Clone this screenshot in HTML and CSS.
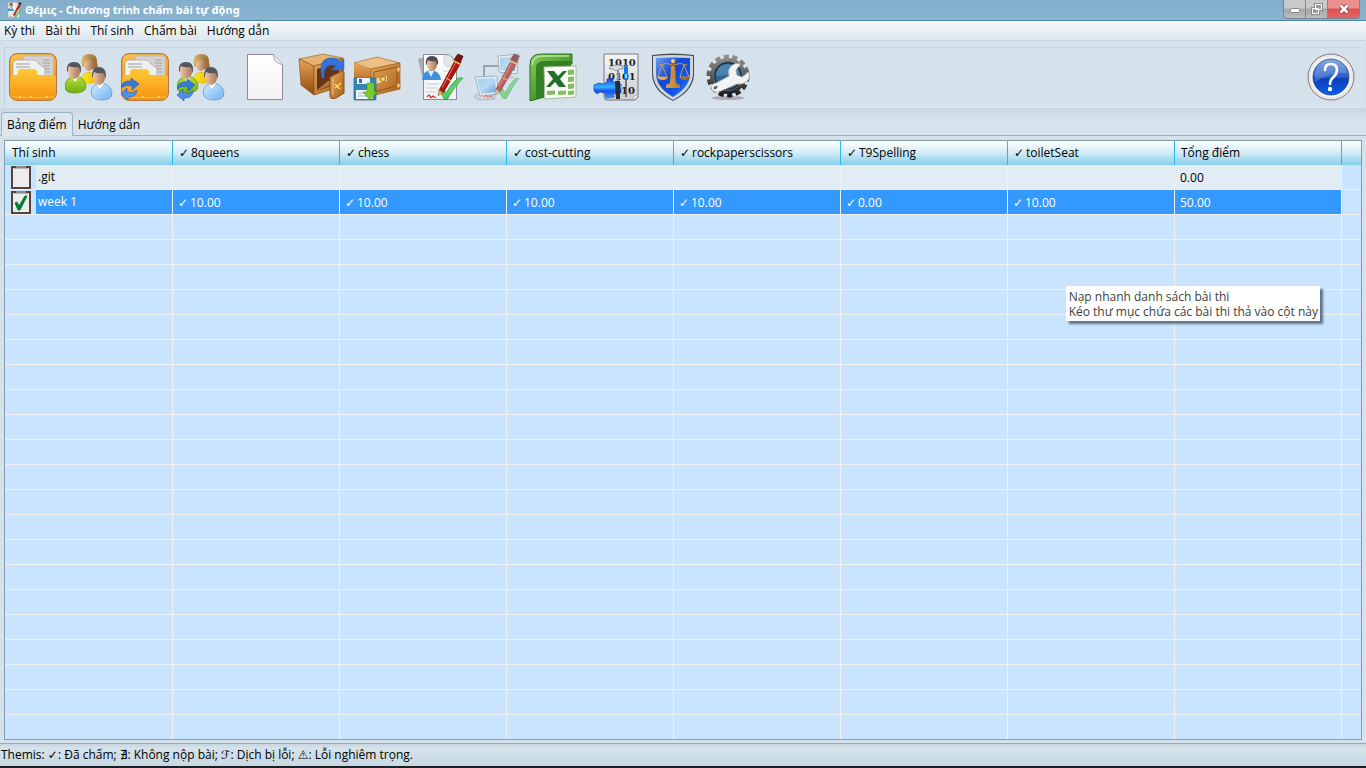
FILE: index.html
```html
<!DOCTYPE html>
<html lang="vi">
<head>
<meta charset="utf-8">
<title>Θέμις - Chương trình chấm bài tự động</title>
<link rel="stylesheet" href="styles.css">
</head>
<body>
<svg class="defs" width="0" height="0" aria-hidden="true">
  <defs>
    <linearGradient id="orange" x1="0" y1="0" x2="0" y2="1"><stop offset="0" stop-color="#fbc04c"/><stop offset="1" stop-color="#ee8a08"/></linearGradient>
    <linearGradient id="pocket" x1="0" y1="0" x2="0" y2="1"><stop offset="0" stop-color="#ffc937"/><stop offset="1" stop-color="#f6920e"/></linearGradient>
    <linearGradient id="paper" x1="0" y1="0" x2="0" y2="1"><stop offset="0" stop-color="#ffffff"/><stop offset="1" stop-color="#f1f1f4"/></linearGradient>
    <linearGradient id="grey" x1="0" y1="0" x2="0" y2="1"><stop offset="0" stop-color="#f5f5f5"/><stop offset="1" stop-color="#c9cdd2"/></linearGradient>
    <linearGradient id="skin" x1="0" y1="0" x2="1" y2="0"><stop offset="0" stop-color="#efc7a4"/><stop offset="1" stop-color="#a8775a"/></linearGradient>
    <linearGradient id="hair" x1="0" y1="0" x2="1" y2="0"><stop offset="0" stop-color="#d9b46c"/><stop offset="1" stop-color="#94662c"/></linearGradient>
    <linearGradient id="green" x1="0" y1="0" x2="0" y2="1"><stop offset="0" stop-color="#b8e23a"/><stop offset="1" stop-color="#6fae12"/></linearGradient>
    <linearGradient id="yellow" x1="0" y1="0" x2="1" y2="0"><stop offset="0" stop-color="#ffe52c"/><stop offset="1" stop-color="#eec400"/></linearGradient>
    <linearGradient id="sky" x1="0" y1="0" x2="1" y2="1"><stop offset="0" stop-color="#d2ebff"/><stop offset="1" stop-color="#6fb2f2"/></linearGradient>
    <linearGradient id="wood" x1="0" y1="0" x2="1" y2="1"><stop offset="0" stop-color="#e6a85e"/><stop offset="1" stop-color="#a95f17"/></linearGradient>
    <linearGradient id="woodSide" x1="0" y1="0" x2="0" y2="1"><stop offset="0" stop-color="#e8a456"/><stop offset="1" stop-color="#8e470f"/></linearGradient>
    <linearGradient id="screen" x1="0" y1="0" x2="1" y2="1"><stop offset="0" stop-color="#8cc4f2"/><stop offset=".5" stop-color="#a9d6f8"/><stop offset="1" stop-color="#2c80d2"/></linearGradient>
    <linearGradient id="excel" x1="0" y1="0" x2="1" y2="1"><stop offset="0" stop-color="#8ccf5e"/><stop offset=".5" stop-color="#4d9f31"/><stop offset="1" stop-color="#1f6b16"/></linearGradient>
    <linearGradient id="shield" x1="0" y1="0" x2="1" y2="1"><stop offset="0" stop-color="#6f9ef2"/><stop offset=".4" stop-color="#1448d4"/><stop offset=".7" stop-color="#1255e8"/><stop offset="1" stop-color="#49a0ff"/></linearGradient>
    <linearGradient id="ball" x1="0" y1="0" x2="0" y2="1"><stop offset="0" stop-color="#6f94dd"/><stop offset=".5" stop-color="#2a5fc9"/><stop offset=".55" stop-color="#0a41b8"/><stop offset="1" stop-color="#0b5cf0"/></linearGradient>
    <linearGradient id="gold" x1="0" y1="0" x2="1" y2="0"><stop offset="0" stop-color="#f0bd62"/><stop offset="1" stop-color="#a05c14"/></linearGradient>
    <linearGradient id="gear" gradientUnits="userSpaceOnUse" x1="0" y1="2" x2="0" y2="44"><stop offset="0" stop-color="#949494"/><stop offset=".6" stop-color="#4c4c4c"/><stop offset="1" stop-color="#161616"/></linearGradient>
    <linearGradient id="tick" x1="0" y1="0" x2="1" y2="1"><stop offset="0" stop-color="#1f9e38"/><stop offset=".5" stop-color="#5ed268"/><stop offset="1" stop-color="#15952a"/></linearGradient>
    <linearGradient id="piece" x1="0" y1="0" x2="0" y2="1"><stop offset="0" stop-color="#1a36e0"/><stop offset=".45" stop-color="#35b4ff"/><stop offset=".65" stop-color="#1450f0"/><stop offset="1" stop-color="#3fa0ff"/></linearGradient>

    <symbol id="i-folder" viewBox="0 0 48 48">
      <rect x=".7" y=".7" width="46.600" height="46.600" rx="7" fill="url(#orange)" stroke="#a8642c"/>
      <path d="M14 26V5q0-2 3-2h24q3 0 3 3v20z" fill="#d3d3d3" stroke="#b3b3b3" stroke-width=".6"/>
      <path d="M4 26V11q0-4 4-4h16q4 0 5 3l7 6v10z" fill="#f0f0f0" stroke="#a9a9a9" stroke-width=".8"/>
      <path d="M7 11h14M7 14h14M34 7h7M34 10h7M35 13h6M36 16h5M37 19h4" stroke="#9f9f9f"/>
      <path d="M1 26q0-4 4-4h2q2 0 2-3t3-3h13q3 0 3 3t2 3h13q4 0 4 4v14q0 7-7 7H8q-7 0-7-7z" fill="url(#pocket)"/>
      <path d="M3 43.500q5 1 21 1t21-1" fill="none" stroke="#ffc45e"/>
      <path d="M11 43v2M22 43v2M38 43v2" stroke="#fff2c8"/>
    </symbol>
    <symbol id="i-sync" viewBox="0 0 18 22">
      <path d="M0 10Q1 2 10 3V0l8 6-7 6V8Q5 6 0 10z" fill="#3478dc" stroke="#2057b4" stroke-width=".6"/>
      <path d="M16 12q-1 8-9 7v3L0 16l6-6v4q6 2 10-2z" fill="#4b90ea" stroke="#2057b4" stroke-width=".6"/>
    </symbol>
    <symbol id="i-users" viewBox="0 0 48 48">
      <path d="M16 30q0-10 8-11 8 1 8 11z" fill="url(#yellow)" stroke="#d3a400" stroke-width=".5"/>
      <path d="M17 13Q15 1 24 1t8 9q2 5-1 6l-6 1z" fill="url(#hair)"/>
      <ellipse cx="23.500" cy="11.500" rx="4.500" ry="6.500" fill="url(#skin)"/><path d="M18 9q1-6 7-6 5 1 5 7-3-1-5-4-3 3-7 3z" fill="url(#hair)"/>
      <path d="M0 33q1-9 10-10 10 1 11 10 0 7-11 7T0 33z" fill="url(#green)" stroke="#5b8a13" stroke-width=".7"/><path d="M6 23l4 6 4-6z" fill="#fff"/>
      <ellipse cx="9" cy="18.500" rx="6" ry="7.500" fill="url(#skin)"/><path d="M2 18q-1-9 7-9t7 9l-1 2q0-5-2-6-5 1-9-1-1 2-1 6z" fill="#55565a"/>
      <path d="M26 40q0-9 10-10 10 1 11 10 0 7-10 7t-11-7z" fill="url(#sky)" stroke="#5b93cd" stroke-width=".7"/><path d="M31 30l4 6 4-6z" fill="#fff"/>
      <ellipse cx="34" cy="24.500" rx="6" ry="7.500" fill="url(#skin)"/><path d="M27 23q0-9 7-9t7 9l-1 3q0-5-2-6-5 1-9-1-1 2-1 6z" fill="#55565a"/>
    </symbol>
    <symbol id="i-page" viewBox="0 0 48 48">
      <path d="M6.500 1.500h26l9 10v35h-35z" fill="url(#paper)" stroke="#93879d"/><path d="M32.500 1.500q0 9 9 10" fill="#ececf0" stroke="#aaa3b0"/>
    </symbol>
    <symbol id="i-restore" viewBox="0 0 48 48">
      <path d="M2 6L26 1l20 4-29 8z" fill="#e8b272" stroke="#a86e31" stroke-width=".7"/>
      <path d="M2 6l15 7v29L4 32z" fill="url(#woodSide)" stroke="#8e531f" stroke-width=".7"/>
      <path d="M17 13l29-8v28L17 42z" fill="url(#wood)" stroke="#8e531f" stroke-width=".7"/>
      <path d="M20 16l22-6v20l-22 8z" fill="#63341a"/><path d="M20 37l11-9 9 1-20 9z" fill="#b8753a"/>
      <path d="M33 24l12-6q2 0 2 2v20l-8 5q-7 2-6-3z" fill="url(#wood)" stroke="#884b16"/><path d="M36 26v16" stroke="#efc37c"/><path d="M38 35l6-5M38 31l5 5" stroke="#ffd75f" stroke-width="1.500"/>
      <path d="M25 25Q20 4 36 5q5 0 7 4l4-3v11H34l5-4q-13-4-12 12z" fill="#3474da" stroke="#2459b5" stroke-width=".5"/>
    </symbol>
    <symbol id="i-backup" viewBox="0 0 48 48">
      <path d="M1 10L24 4l23 6-29 6z" fill="#eec085" stroke="#a86e31" stroke-width=".7"/>
      <path d="M1 10l17 6v26L1 34z" fill="url(#woodSide)"/>
      <path d="M18 16l29-6v26l-29 7z" fill="url(#wood)" stroke="#9c5e22" stroke-width=".7"/>
      <path d="M21 19l23-5v19l-23 6z" fill="none" stroke="#995218"/>
      <path d="M44 14l3 1v3l-3 1zM44 30l3 1v3l-3 1z" fill="#f2ce77" stroke="#a9712c" stroke-width=".5"/>
      <path d="M22 26l12-3v5l-12 3z" fill="#efd58f"/><circle cx="30" cy="26" r="2.500" fill="#ffda69" stroke="#9b641f"/>
      <rect x="1" y="25" width="22" height="22" rx="1" fill="#3487b7" stroke="#256487" stroke-width=".7"/><rect x="4" y="25" width="13" height="6" fill="#edf4f7"/><rect x="6" y="26" width="3" height="4" fill="#3a6f91"/><rect x="3" y="37" width="17" height="9" fill="#f4f8fa"/><path d="M5 40h9M5 43h9" stroke="#8ab0c4"/>
      <path d="M14 30h7v9h3l-7 8-7-8h4z" fill="#7bcd25" stroke="#4d9c11" stroke-width=".6"/>
    </symbol>
    <symbol id="i-pen" viewBox="0 0 26 42">
      <path d="M2 36L18 6l5 3L6 38z" fill="#b0190f" stroke="#5f0f0a" stroke-width=".8"/><path d="M5 33L18 9" stroke="#ee6a55"/><path d="M16 7l4-6 5 2-3 7z" fill="#7b120d" stroke="#4d0c08" stroke-width=".6"/><path d="M15 7l8 4" stroke="#edc45a" stroke-width="1.500"/><path d="M9 24l5 3" stroke="#edc45a"/><path d="M1 41l1-6 4 3z" fill="#d7b06c" stroke="#7c5327" stroke-width=".4"/>
    </symbol>
    <symbol id="i-judge" viewBox="0 0 48 48">
      <path d="M1 6l3-1 4 20-3-2zM4 5l4-1v21z" fill="#a5adb2"/>
      <path d="M6.500 1.500h26l7 8v37h-33z" fill="url(#paper)" stroke="#8d8a96"/><path d="M27 2q-1 11 3 12l9-1V9l-7-7z" fill="#e3e5e8" stroke="#c0c3c6" stroke-width=".6"/>
      <path d="M5 27q0-9 9-10 9 1 10 10z" fill="#3f8fdc"/><path d="M11 18l3 6 3-6z" fill="#d8edff"/><ellipse cx="15" cy="11.500" rx="5" ry="6.500" fill="url(#skin)"/><path d="M9 11q-1-8 6-8t6 8l-1 1q-1-4-2-4-4 1-7-1-1 1-1 5z" fill="#4b4e54"/>
      <path d="M9 31h13M9 35h12M9 39h10M26 18h6M27 23h4" stroke="#c9cccf"/>
      <path d="M10 44q2-3 3-1 0 3 3 0 1 2 3 1" fill="none" stroke="#e12321" stroke-width="1.300"/>
      <path d="M22 37q3-3 5-1l2 4q5-9 11-14 3-2 6-1-9 9-16 22-3 0-4-3z" fill="url(#tick)" stroke="#168330" stroke-width=".5"/>
      <use href="#i-pen" x="19" y="0" width="29" height="44"/>
    </symbol>
    <symbol id="i-network" viewBox="0 0 48 48">
      <g opacity=".65"><path d="M11 24V13h15" fill="none" stroke="#5b6369" stroke-width="1.500"/>
      <path d="M25 3l21-2-2 20-18-2z" fill="#eef3f5" stroke="#8d9ba4"/><path d="M27 5l17-2-2 15-15-1z" fill="url(#screen)"/><path d="M28 20l10 1 5 5-14-1z" fill="#b8c5cc"/>
      <path d="M2 24l22-1 1 18-18 2z" fill="#eef3f5" stroke="#8d9ba4"/><path d="M4 26l18-1 1 14-15 2z" fill="url(#screen)"/><path d="M3 41l4 2 15-1v4L6 47l-5-3z" fill="#cad0d3" stroke="#98a2a9"/>
      <path d="M11 44q2-3 3-1 0 3 3 0 1 2 3 1" fill="none" stroke="#e12321"/>
      <path d="M25 37q2-3 5-1l2 4q5-9 9-13 2-2 5-2-7 9-13 21-3 0-4-2z" fill="url(#tick)" stroke="#168330" stroke-width=".5"/>
      <use href="#i-pen" x="20" y="0" width="28" height="43"/></g>
    </symbol>
    <symbol id="i-excel" viewBox="0 0 48 48">
      <path d="M1 12Q1 1 12 1h31v10H17q-5 0-5 5v29l-11 3z" fill="url(#excel)" stroke="#26701b"/><path d="M3 12q1-9 10-9h27" fill="none" stroke="#b9e69a" stroke-width="1.500"/>
      <path d="M7 46V15q0-7 8-7h27v6H15v31z" fill="#367f27"/><path d="M15 14l32-1v31l-31 2z" fill="#fbfdf9" stroke="#a2bd97"/>
      <path d="M39 17l6-.5v5l-6 .5zM39 24l6-.5v5l-6 .5zM39 31l6-.5v5l-6 .5zM39 38l6-.5v4l-6 .5zM29 38l8-.5v4l-8 .5zM18 38l8-.5v4l-8 .5z" fill="#84bd5d"/>
      <path d="M18 18h7l4 5 5-5h4l-7 8 6 8h-7l-4-5-5 5h-4l7-8z" fill="#23702a"/>
    </symbol>
    <symbol id="i-binary" viewBox="0 0 48 48">
      <path d="M11 1h34v43l-3 3H14q-3 0-3-3z" fill="url(#grey)" stroke="#7d7384"/><path d="M45 42q-5 0-5 5" fill="#fff" stroke="#aaa"/>
      <g class="bits"><text x="15" y="13">1010</text><text x="15" y="27">0101</text><text x="28" y="41">10</text></g>
      <path d="M1 32l5-2 4 1 4-2v-3l6-1v4l8 2v9l-5 1-3-1 1 4-8 1-1-5-5-1-3 2-3-3z" fill="url(#piece)" stroke="#1230ad" stroke-width=".6"/>
      <path d="M16 15q5-5 14-2v3h-4l-3 2-3-2h-3z" fill="#d8dcdf" stroke="#666" stroke-width=".6"/><path d="M24 17h2v11h-2z" fill="#8d9298"/><path d="M22 28h5v18h-4z" fill="#292c31"/>
      <path d="M33 26v18" stroke="#4e555b" stroke-width="1.500"/><path d="M31 14q2-5 4 0v13h-4z" fill="#1576ee"/><path d="M32 21h2v4h-2z" fill="#6ce6ff"/>
    </symbol>
    <symbol id="i-shield" viewBox="0 0 48 48">
      <path d="M3 2q21-3 42 0v20q-1 16-21 26Q4 38 3 22z" fill="#464b54"/><path d="M4 3q20-2 40 0v18q-1 16-20 26Q5 37 4 21z" fill="#cfd6db"/><path d="M7 5q17-1 34 0v16q0 13-17 23Q7 34 7 21z" fill="url(#shield)"/>
      <path d="M10 12q8-3 14 0 7-3 14 0M13 12L9 24h9zM35 12l-4 12h9z" fill="none" stroke="#d9a04f" stroke-width=".9"/><path d="M24 7v26" stroke="#a8631c" stroke-width="3"/><circle cx="24" cy="8" r="2" fill="#f5ca79"/><path d="M8 24h11q-1 3-5 3t-6-3zM30 24h11q-1 3-5 3t-6-3zM22 13h4l1 18h-6zM17 32q7-4 14 0v3H17z" fill="url(#gold)"/>
    </symbol>
    <symbol id="i-settings" viewBox="0 0 48 48">
      <ellipse cx="23" cy="45" rx="16" ry="2" fill="#86718b" opacity=".5"/>
      <circle cx="23" cy="23" r="19" fill="none" stroke="url(#gear)" stroke-width="5" pathLength="140" stroke-dasharray="6 4"/>
      <circle cx="23" cy="23" r="18" fill="url(#gear)"/><circle cx="23" cy="23" r="14.500" fill="#1b2c3a" stroke="#8b9298" stroke-width=".6"/><circle cx="23" cy="23" r="12.500" fill="#2c6597"/><path d="M11 23q1-12 12-12 10 1 12 10z" fill="#4b84ad"/>
      <path d="M24 23q-2-6 2-10 4-4 10-2l-5 6 1 5 5 2 7-5q2 6-3 10-4 3-9 2L16 38q-2 1-6 1-4-1-4-5 1-4 5-4z" fill="#f3f3f3" stroke="#a0a0a0" stroke-width=".8"/><ellipse cx="10.500" cy="34.500" rx="2.200" ry="1.500" transform="rotate(-35 10.500 34.500)" fill="#59616a"/>
    </symbol>
    <symbol id="i-help" viewBox="0 0 48 48">
      <circle cx="24" cy="24" r="23" fill="#e8e8e9" stroke="#7d7883"/><path d="M5 37q8 10 19 10t19-10A23 23 0 0 1 5 37z" fill="#a7a7aa"/><circle cx="24" cy="24" r="20" fill="#fafafa"/><circle cx="24" cy="24" r="18" fill="url(#ball)" stroke="#315496"/>
      <path d="M8 23A16 16 0 0 1 40 20Q25 18 8 29z" fill="#fff" opacity=".17"/>
      <path d="M18 17q0-6 6-6 6 0 6 6 0 4-3.500 7t-3.500 7" fill="none" stroke="#fff" stroke-width="2.600" stroke-linecap="round"/><circle cx="23" cy="36" r="2.200" fill="#fff"/>
    </symbol>
  </defs>
</svg>

<div class="window">
  <header class="titlebar">
    <svg class="app-icon" aria-hidden="true"><use href="#i-judge"/></svg>
    <h1 class="title">Θέμις - Chương trình chấm bài tự động</h1>
    <div class="window-controls">
      <button class="control" type="button" aria-label="Thu nhỏ"><svg width="12" height="10" viewBox="0 0 12 10"><rect x="1.500" y="4.500" width="9" height="4" rx="1" fill="#fff" stroke="#8a8a8a"/></svg></button>
      <button class="control" type="button" aria-label="Khôi phục"><svg width="12" height="12" viewBox="0 0 12 12"><path d="M4.500 1.500h6v5h-6z M1.500 5.500h6v5h-6z" fill="#eee" stroke="#8a8a8a" stroke-width="3"/><path d="M4.500 1.500h6v5h-6z M1.500 5.500h6v5h-6z" fill="#999" stroke="#fff" stroke-width="1"/></svg></button>
      <button class="control close" type="button" aria-label="Đóng"><svg width="12" height="10" viewBox="0 0 12 10"><path d="M2.500 1.500l7 7m0-7l-7 7" stroke="#713b42" stroke-width="4"/><path d="M2.500 1.500l7 7m0-7l-7 7" stroke="#fff" stroke-width="2.500"/></svg></button>
    </div>
  </header>
  <nav class="menubar" aria-label="Trình đơn">
    <button type="button">Kỳ thi</button><button type="button">Bài thi</button><button type="button">Thí sinh</button><button type="button">Chấm bài</button><button type="button">Hướng dẫn</button>
  </nav>
  <div class="toolbar" role="toolbar">
    <div class="group">
      <button class="tool" type="button" aria-label="Mở kỳ thi"><svg><use href="#i-folder"/></svg></button>
      <button class="tool" type="button" aria-label="Mở thí sinh"><svg><use href="#i-users"/></svg></button>
      <button class="tool" type="button" aria-label="Nạp lại bài thi"><svg viewBox="0 0 48 48"><use href="#i-folder"/><use href="#i-sync" x="0" y="25" width="18" height="22"/></svg></button>
      <button class="tool" type="button" aria-label="Nạp lại thí sinh"><svg viewBox="0 0 48 48"><use href="#i-users"/><use href="#i-sync" x="0" y="26" width="18" height="22"/></svg></button>
    </div>
    <div class="group">
      <button class="tool" type="button" aria-label="Tạo mới"><svg><use href="#i-page"/></svg></button>
      <button class="tool" type="button" aria-label="Khôi phục dữ liệu"><svg><use href="#i-restore"/></svg></button>
      <button class="tool" type="button" aria-label="Sao lưu"><svg><use href="#i-backup"/></svg></button>
    </div>
    <div class="group">
      <button class="tool" type="button" aria-label="Chấm bài"><svg><use href="#i-judge"/></svg></button>
      <button class="tool" type="button" aria-label="Chấm qua mạng"><svg><use href="#i-network"/></svg></button>
      <button class="tool" type="button" aria-label="Xuất ra Excel"><svg><use href="#i-excel"/></svg></button>
    </div>
    <div class="group">
      <button class="tool" type="button" aria-label="Trình dịch"><svg><use href="#i-binary"/></svg></button>
      <button class="tool" type="button" aria-label="Quy tắc chấm"><svg><use href="#i-shield"/></svg></button>
      <button class="tool" type="button" aria-label="Thiết lập"><svg><use href="#i-settings"/></svg></button>
    </div>
    <button class="tool help" type="button" aria-label="Trợ giúp"><svg><use href="#i-help"/></svg></button>
  </div>
  <div class="tabs" role="tablist">
    <button class="tab active" type="button" role="tab" aria-selected="true">Bảng điểm</button>
    <button class="tab" type="button" role="tab" aria-selected="false">Hướng dẫn</button>
  </div>
  <main class="panel">
    <div class="grid">
      <table class="scores">
        <colgroup><col class="col-name"><col class="col"><col class="col"><col class="col"><col class="col"><col class="col"><col class="col"><col class="col"><col></colgroup>
        <thead><tr><th>Thí sinh</th><th><i class="mark">✓</i>8queens</th><th><i class="mark">✓</i>chess</th><th><i class="mark">✓</i>cost-cutting</th><th><i class="mark">✓</i>rockpaperscissors</th><th><i class="mark">✓</i>T9Spelling</th><th><i class="mark">✓</i>toiletSeat</th><th>Tổng điểm</th><th></th></tr></thead>
        <tbody>
          <tr><td class="name"><div class="name-cell"><svg class="clip" viewBox="0 0 20 23"><rect x="1" y="1" width="18" height="21" fill="#ececed" stroke="#54443a" stroke-width="2"/><path d="M3 2h14v1H3z" fill="#b5b5b5"/><path d="M5 0h10v2H5z" fill="#8d8d8d"/></svg><span>.git</span></div></td><td></td><td></td><td></td><td></td><td></td><td></td><td>0.00</td><td></td></tr>
          <tr class="selected"><td class="name"><div class="name-cell"><svg class="clip" viewBox="0 0 20 23"><rect x="1" y="1" width="18" height="21" fill="#ececed" stroke="#54443a" stroke-width="2"/><path d="M3 2h14v1H3z" fill="#b5b5b5"/><path d="M5 0h10v2H5z" fill="#8d8d8d"/><path d="M4 12l2-1 2 4 6-10h2L9 19H7z" fill="#087b3b" stroke="#087b3b"/></svg><span>week 1</span></div></td><td><i class="mark">✓</i>10.00</td><td><i class="mark">✓</i>10.00</td><td><i class="mark">✓</i>10.00</td><td><i class="mark">✓</i>10.00</td><td><i class="mark">✓</i>0.00</td><td><i class="mark">✓</i>10.00</td><td>50.00</td><td></td></tr>
        </tbody>
      </table>
      <div class="tooltip" role="tooltip">Nạp nhanh danh sách bài thi<br>Kéo thư mục chứa các bài thi thả vào cột này</div>
    </div>
  </main>
  <footer class="statusbar">Themis: <i class="sign">✓</i>: Đã chấm; <i class="sign">∄</i>: Không nộp bài; <i class="sign">ℱ</i>: Dịch bị lỗi; <i class="sign">⚠</i>: Lỗi nghiêm trọng.</footer>
</div>
</body>
</html>
```
FILE: styles.css
```css
* { box-sizing: border-box; }
body {
  margin: 0;
  font: 12px/16px "Open Sans", "Noto Sans", sans-serif;
  color: #000;
}
button { font: inherit; color: inherit; border: 0; padding: 0; background: none; }
.defs { position: absolute; }
.window {
  display: flex;
  flex-direction: column;
  min-height: 100vh;
  background: #d6e2eb;
  border-bottom: 2px solid #1b1f24;
}
.titlebar {
  display: flex;
  align-items: center;
  height: 21px;
  padding: 0 6px;
  gap: 3px;
  background: linear-gradient(#83aecb, #8ab3cf);
  border-bottom: 1px solid #5087ae;
}
.app-icon { width: 16px; height: 16px; }
.title { margin: 0; font: 700 11px/16px "Noto Sans", sans-serif; color: #fff; }
.window-controls {
  display: flex;
  align-self: flex-start;
  margin-left: auto;
  border: 1px solid #75848d;
  border-top: 0;
  border-radius: 0 0 4px 4px;
  overflow: hidden;
}
.control {
  display: flex;
  align-items: center;
  justify-content: center;
  width: 22px;
  height: 18px;
  background: linear-gradient(#c9c9c9 45%, #a6a6a6 50%, #bcbcbc);
  border-right: 1px solid #858585;
}
.control.close { width: 31px; border: 0; background: linear-gradient(#ed8e8e 45%, #de5050 50%, #e46767); }
.menubar {
  display: flex;
  gap: 10px;
  height: 20px;
  padding: 0 4px;
  background: linear-gradient(#f6f9fb, #dde7ee);
  border-bottom: 1px solid #cbd7e0;
}
.toolbar {
  display: flex;
  gap: 16px;
  margin: 6px 4px 0;
  padding: 5px 6px 6px 4px;
  border: 1px solid #c6d3dd;
  border-color: #c6d3dd #e1eaf0 #e1eaf0 #c6d3dd;
}
.group { display: flex; gap: 8px; }
.tool { width: 48px; height: 48px; }
.tool svg { display: block; width: 48px; height: 48px; }
.help { margin-left: auto; }
.bits { font: 700 10px "DejaVu Serif", serif; fill: #222; }
.tabs {
  display: flex;
  align-items: flex-end;
  height: 28px;
  padding-left: 1px;
  background: linear-gradient(#cad7e3, #d8e4ed 50%);
  border-bottom: 1px solid #9cb1c2;
}
.tab { height: 21px; padding: 0 5px; }
.tab.active {
  height: 24px;
  margin-bottom: -1px;
  background: #dce6ee;
  border: 1px solid #9cb1c2;
  border-bottom: 0;
  border-radius: 4px 4px 0 0;
}
.panel { display: flex; flex: 1; padding: 4px 4px 3px; border-bottom: 1px solid #93aabd; }
.grid {
  position: relative;
  flex: 1;
  min-width: 0;
  border: 1px solid #819bb0;
  background:
    repeating-linear-gradient(90deg, transparent 0 166px, #f0f0f0 166px 167px) 1px 0,
    repeating-linear-gradient(transparent 0 24px, #f0f0f0 24px 25px) 0 24px,
    #c9e4ff;
}
.scores { width: 100%; table-layout: fixed; border-collapse: separate; border-spacing: 0; }
.col-name { width: 168px; }
.col { width: 167px; }
.scores th {
  height: 24px;
  padding: 0 6px;
  text-align: left;
  font-weight: 400;
  background: linear-gradient(#fff, #d8eef7 45%, #87ceeb);
  border-right: 1px solid #28b9ee;
}
.scores th:first-child { padding-left: 7px; }
.scores th:last-child { border-right: 0; }
.scores td {
  height: 25px;
  padding: 1px 5px 0;
  background: #e2ecf4;
  border-right: 1px solid #f0f0f0;
  border-bottom: 1px solid #f0f0f0;
}
.scores td:last-child { background: #c9e4ff; border-right: 0; }
.scores td.name { padding: 0; background: #c9e4ff; }
.name-cell { display: flex; align-items: center; height: 24px; padding-left: 6px; gap: 5px; }
.name-cell span { flex: 1; padding-left: 2px; line-height: 24px; background: #e2ecf4; }
.clip { width: 20px; height: 23px; }
.selected td:not(:last-child) { color: #fff; background: #3399ff; }
.selected td.name { background: #c9e4ff; }
.selected .name-cell span { background: #3399ff; }
.mark, .sign { font-style: normal; font-family: "DejaVu Sans", sans-serif; font-size: 12px; line-height: 12px; }
.mark { display: inline-block; width: 12px; }
.tooltip {
  position: absolute;
  top: 145px;
  right: 41px;
  padding: 3px 2px 2px 3px;
  line-height: 15px;
  white-space: nowrap;
  color: #404040;
  background: #fff;
  box-shadow: 3px 3px 2px rgba(60, 80, 100, .75);
}
.statusbar {
  height: 22px;
  padding: 3px 1px 0;
  line-height: 16px;
  background: linear-gradient(#c5d5df, #d6e3eb 4px, #c6d8e2);
}
```
